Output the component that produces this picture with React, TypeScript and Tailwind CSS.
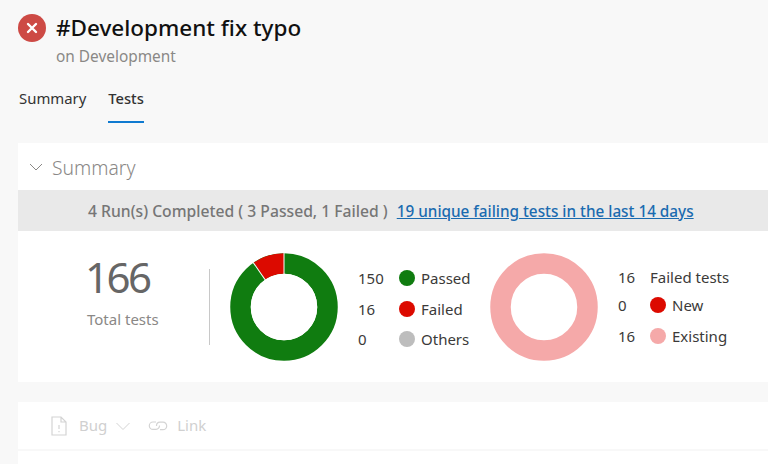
import React from "react";

const font = { fontFamily: '"Noto Sans", "Open Sans", sans-serif' };

function Donut({ red }: { red: boolean }) {
  const c = 2 * Math.PI * 43.5;
  const frac = 16 / 166;
  return (
    <svg width="108" height="108" viewBox="0 0 108 108" className="shrink-0">
      {red ? (
        <g transform="rotate(-90 54 54)" fill="none" strokeWidth="20.5">
          <circle cx="54" cy="54" r="43.5" stroke="#107c10" />
          <circle
            cx="54"
            cy="54"
            r="43.5"
            stroke="#dc0a00"
            strokeDasharray={`${c * frac} ${c - c * frac}`}
            strokeDashoffset={c * frac}
          />
          <line x1="54" y1="54" x2="108" y2="54" stroke="#fff" strokeWidth="1" />
          <line x1="54" y1="54" x2="108" y2="54" stroke="#fff" strokeWidth="1" transform={`rotate(${-360 * frac} 54 54)`} />
          <circle cx="54" cy="54" r="33.2" fill="#fff" stroke="none" />
        </g>
      ) : (
        <circle cx="54" cy="54" r="43.5" fill="none" stroke="#f5a9a9" strokeWidth="20.5" />
      )}
    </svg>
  );
}

function Dot({ color }: { color: string }) {
  return <span className={`block w-4 h-4 mt-[2px] rounded-full shrink-0 ${color}`} />;
}

export default function App() {
  return (
    <div style={font} className="w-[768px] h-[464px] overflow-hidden bg-[#f8f8f8] text-[#201f1e]">
      <div className="h-[143px] pl-[18px] pt-[14px]">
        <div className="flex items-center gap-[10px] h-[28px]">
          <span className="w-[28px] h-[28px] rounded-full bg-[#cd4a45] flex items-center justify-center shrink-0">
            <svg width="12" height="12" viewBox="0 0 12 12">
              <path d="M2 2 L10 10 M10 2 L2 10" stroke="#fff" strokeWidth="2.4" strokeLinecap="round" />
            </svg>
          </span>
          <span className="text-[22.5px] leading-[28px] font-medium text-[#111] whitespace-nowrap">#Development fix typo</span>
        </div>
        <div className="ml-[38px] mt-[2px] text-[15.4px] leading-[26px] text-[#8a8886]">on Development</div>
        <div className="flex mt-[15px] ml-px gap-[22px] text-[14.9px]">
          <div className="h-[38px] leading-[26px] text-[#333]">Summary</div>
          <div className="h-[38px] leading-[26px] font-medium text-[14.7px] text-[#333] border-b-[2px] border-[#0f7ad0]">Tests</div>
        </div>
      </div>

      <div className="ml-[18px] bg-white h-[239px]">
        <div className="h-[47px] flex items-center pl-[10px] gap-[8px]">
          <svg width="16" height="16" viewBox="0 0 16 16" fill="none">
            <path d="M2 5 L8 11 L14 5" stroke="#8a8886" strokeWidth="1" />
          </svg>
          <span className="text-[19.3px] text-[#8a8886] font-light mt-[3px]">Summary</span>
        </div>
        <div className="h-[41px] bg-[#e9e9e9] flex items-center pl-[70px] pt-[2px] text-[15.7px] whitespace-nowrap">
          <span className="text-[#767676] font-medium">4 Run(s) Completed ( 3 Passed, 1 Failed )</span>
          <span className="ml-[9px] text-[15.3px] font-medium text-[#1a6bb0] underline">19 unique failing tests in the last 14 days</span>
        </div>
        <div className="h-[151px] flex items-center pl-[69px] pt-[1px] whitespace-nowrap text-[15px] text-[#3b3a39]">
          <div className="w-[122px] flex flex-col mb-[32px]">
            <span className="text-[42px] leading-[48px] tracking-[-2.5px] -ml-[2px] text-[#666]">166</span>
            <span className="text-[#8a8886] leading-[20px] mt-[8px]">Total tests</span>
          </div>
          <div className="w-px h-[76px] bg-[#c8c8c8] mr-[20px]" />
          <Donut red />
          <div className="ml-[20px] mt-[2px] w-[132px] grid grid-cols-[41px_22px_1fr] grid-rows-[31px_30px_20px] leading-[20px]">
            <span>150</span><Dot color="bg-[#107c10]" /><span>Passed</span>
            <span>16</span><Dot color="bg-[#dc0a00]" /><span>Failed</span>
            <span>0</span><Dot color="bg-[#bdbdbd]" /><span>Others</span>
          </div>
          <Donut red={false} />
          <div className="ml-[20px] -mt-[2px] grid grid-cols-[32px_22px_1fr] grid-rows-[28px_31px_20px] leading-[20px]">
            <span>16</span><span className="col-span-2">Failed tests</span>
            <span>0</span><Dot color="bg-[#dc0a00]" /><span>New</span>
            <span>16</span><Dot color="bg-[#f5a9a9]" /><span>Existing</span>
          </div>
        </div>
      </div>

      <div className="ml-[18px] mt-[20px] bg-white h-[47px] flex items-center pl-[33px] text-[15px] text-[#d0d0d0]">
        <svg width="16" height="20" viewBox="0 0 16 20" fill="none" stroke="#d4d4d4" strokeWidth="1.2">
          <path d="M1 1 H10 L15 6 V19 H1 Z M10 1 V6 H15" />
          <path d="M8 9 V13 M8 15 V16.2" />
        </svg>
        <span className="ml-[12px]">Bug</span>
        <svg className="ml-[8px]" width="16" height="16" viewBox="0 0 16 16" fill="none">
          <path d="M1.5 5 L8 11.5 L14.5 5" stroke="#d4d4d4" strokeWidth="1" />
        </svg>
        <svg className="ml-[17px]" width="20" height="14" viewBox="0 0 20 14" fill="none" stroke="#d4d4d4" strokeWidth="1.2">
          <path d="M8 3 H5 A3.7 3.7 0 0 0 5 10.4 H8 A3.7 3.7 0 0 0 11.5 6.5" />
          <path d="M12 10.6 H15 A3.7 3.7 0 0 0 15 3.2 H12 A3.7 3.7 0 0 0 8.5 7" />
        </svg>
        <span className="ml-[9px]">Link</span>
      </div>
      <div className="ml-[18px] mt-[2px] bg-white h-[20px]" />
    </div>
  );
}
